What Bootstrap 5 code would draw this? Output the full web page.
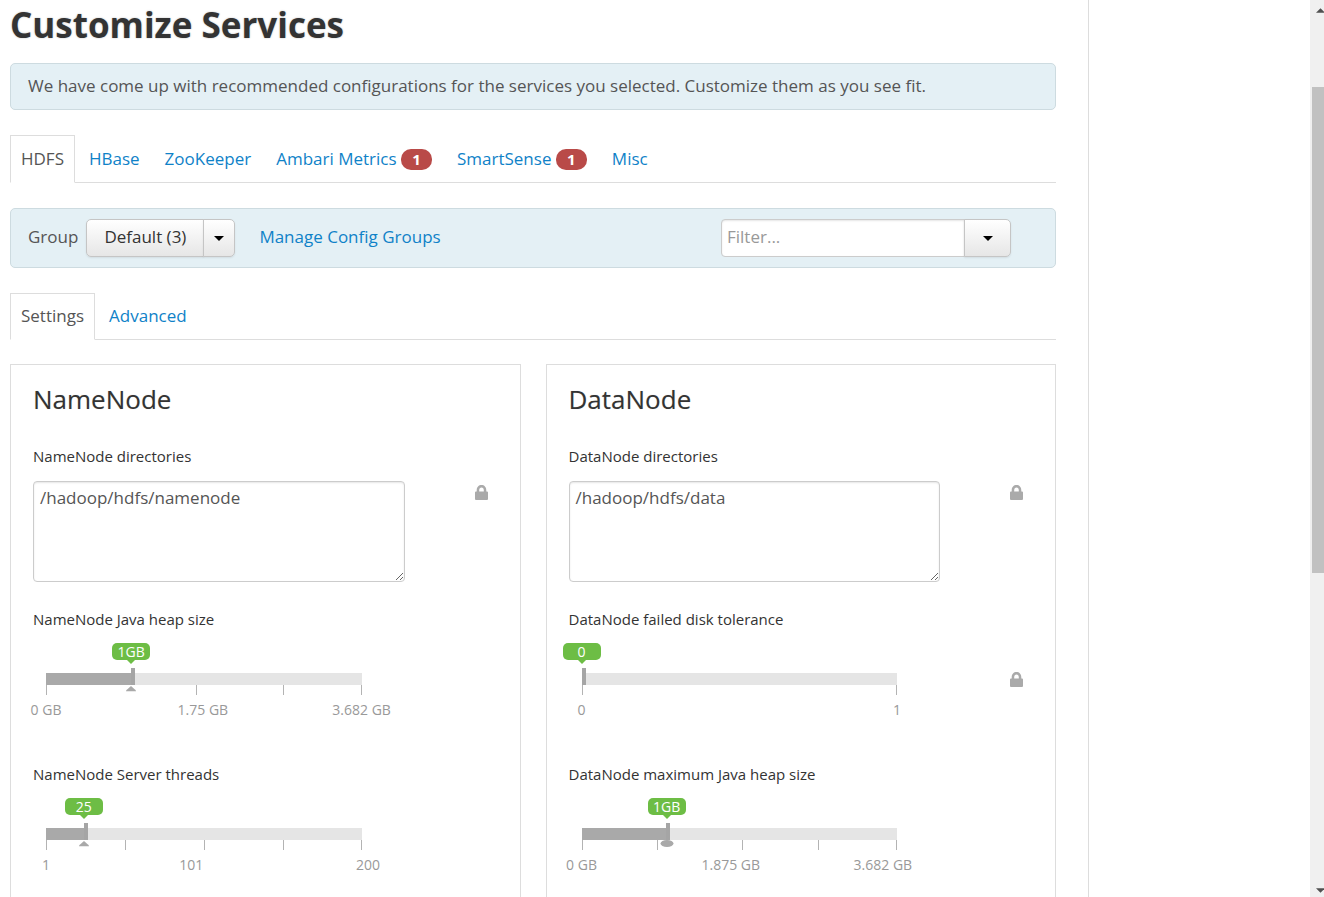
<!DOCTYPE html>
<html lang="en">
<head>
<meta charset="utf-8">
<meta name="viewport" content="width=device-width, initial-scale=1">
<title>Customize Services</title>
<link href="https://cdn.jsdelivr.net/npm/bootstrap@5.3.0/dist/css/bootstrap.min.css" rel="stylesheet">
<style>
  body { font-family: "Open Sans", "Noto Sans", sans-serif; font-size: 17px; line-height: 25px; color: #555; background: #fff; }
  a { color: #0f82c8; text-decoration: none; }
  .side-space { flex: 0 0 221px; }
  .wizard { flex: 1 1 0; border-right: 1px solid #ddd; padding: 0 32px 0 10px; }
  h1 { font-size: 35px; line-height: 50px; margin: 0 0 13px; font-weight: 700; color: #333; text-shadow: 0 0 2px #bbb; }
  .info-bar { background: #e4f0f5; border: 1px solid #cddbe0; border-radius: 5px; padding: 9px 17px 11px; margin-bottom: 25px; color: #555; }
  .group-bar { padding: 10px 44px 10px 17px; }
  .bar-text { margin-bottom: 4px; }
  .nav-tabs { --bs-nav-tabs-border-color: #ddd; margin-bottom: 25px; gap: 3px; }
  .nav-tabs .nav-link { padding: 10px; line-height: 26px; border-radius: 0; color: #0f82c8; white-space: nowrap; }
  .nav-tabs .nav-link.active { color: #555; border-color: #ddd #ddd #fff; }
  .sub-tabs { margin-bottom: 24px; }
  .sub-tabs .nav-link { padding: 9px 10px 10px; }
  .count { display: inline-block; min-width: 31px; background: #b94a48; color: #fff; font-size: 15px; font-weight: 700; line-height: 21px; border-radius: 10px; text-align: center; }
  .btn-soft { --bs-btn-padding-x: 17px; --bs-btn-font-size: 17px; --bs-btn-line-height: 26px; --bs-btn-border-radius: 5px;
    --bs-btn-color: #333; --bs-btn-border-color: #c5c5c5; --bs-btn-hover-border-color: #bbb;
    padding-top: 4px; padding-bottom: 6px;
    background-image: linear-gradient(#fff, #e6e6e6); box-shadow: 0 1px 2px rgba(0,0,0,.08); }
  .btn-soft.dropdown-toggle { padding-left: 10px; padding-right: 10px; }
  .dropdown-toggle::after { margin: 0; border-top: 5px solid #000; border-left: 5px solid transparent; border-right: 5px solid transparent; vertical-align: 2px; }
  .filter-box { width: 290px; }
  .filter-box .btn-soft { width: 47px; }
  .form-control { color: #555; border-color: #ccc; border-radius: 4px; font-size: 17px; line-height: 26px; padding: 4px 5px 6px; box-shadow: inset 0 1px 2px rgba(0,0,0,.1); }
  .form-control::placeholder { color: #999; }
  .panels { display: grid; grid-template-columns: 1fr 1fr; gap: 25px; }
  .panel { border: 1px solid #ddd; padding: 15px 22px; height: 680px; }
  h2 { font-size: 26px; line-height: 38px; margin: 0 0 26px; font-weight: 400; color: #333; text-shadow: 0 0 1px #ccc; }
  .config { margin-bottom: 25px; }
  .config label { display: block; font-size: 15px; line-height: 25px; color: #333; margin-bottom: 12px; }
  .config-cell { width: 80%; }
  textarea.form-control { height: 101px; padding: 3px 6px; }
  .lock-icon { width: 13px; height: 15px; margin-right: 10px; fill: #aaa; }
  .config-slider { margin-bottom: 38px; }
  .config-slider label { margin-bottom: 11px; }
  .slider-wrap { margin: 0 43px 0 13px; }
  .bubble-row { position: relative; height: 25px; }
  .bubble { position: absolute; transform: translateX(-50%); width: 38px; line-height: 17px; height: 17px; font-size: 14px; color: #fff; background: #6dbd45; border-radius: 5px; text-align: center; }
  .bubble::after { content: ""; position: absolute; top: 17px; left: 15px; border: 4px solid transparent; border-top-color: #6dbd45; border-bottom: 0; }
  .slider { -webkit-appearance: none; appearance: none; display: block; width: 100%; height: 17px; margin: 0; padding: 5px 0 0; background: none; }
  .slider::-webkit-slider-runnable-track { height: 12px; background: linear-gradient(to right, #a9a9a9 var(--fill), #e5e5e5 var(--fill)); }
  .slider::-webkit-slider-thumb { -webkit-appearance: none; width: 4px; height: 17px; margin-top: -5px; background: #a5a5a5; }
  .ticks { position: relative; height: 10px; }
  .ticks i { position: absolute; top: 0; width: 1px; height: 10px; background: #b3b3b3; }
  .ticks i:last-of-type { margin-left: -1px; }
  .ticks svg { position: absolute; top: 0; width: 14px; height: 7px; margin-left: -7px; fill: #a9a9a9; }
  .scale { position: relative; height: 29px; font-size: 14px; line-height: 29px; color: #999; white-space: nowrap; }
  .scale span { position: absolute; transform: translateX(-50%); }
  .scroll-rail { flex: 0 0 14px; min-width: 0; overflow: hidden; background: #f0f0f0; padding-left: 2px; }
  .scroll-rail svg { display: block; width: 9px; height: 5px; margin-left: 4px; flex-shrink: 0; fill: #505050; }
  .scroll-thumb { background: #c1c1c1; }
</style>
</head>
<body>
<svg class="d-none">
  <symbol id="lock" viewBox="0 0 13 15"><path fill-rule="evenodd" d="M1 6.500h.7V5.200C1.700 2 3.700 0 6.500 0s4.800 2 4.800 5.200v1.300h.7q1 0 1 1V14q0 1-1 1H1q-1 0-1-1V7.500q0-1 1-1zM4.200 6.500h4.600V5.200c0-1.700-.9-2.700-2.300-2.700S4.200 3.500 4.200 5.200z"/></symbol>
</svg>
<div class="d-flex vh-100 overflow-hidden">
  <main class="wizard">
    <h1>Customize Services</h1>
    <div class="info-bar">We have come up with recommended configurations for the services you selected. Customize them as you see fit.</div>
    <ul class="nav nav-tabs">
      <li class="nav-item"><a class="nav-link active" href="#">HDFS</a></li>
      <li class="nav-item"><a class="nav-link" href="#">HBase</a></li>
      <li class="nav-item"><a class="nav-link" href="#">ZooKeeper</a></li>
      <li class="nav-item"><a class="nav-link" href="#">Ambari Metrics <span class="count">1</span></a></li>
      <li class="nav-item"><a class="nav-link" href="#">SmartSense <span class="count">1</span></a></li>
      <li class="nav-item"><a class="nav-link" href="#">Misc</a></li>
    </ul>
    <div class="info-bar group-bar d-flex align-items-center">
      <span class="bar-text">Group</span>
      <div class="btn-group ms-2">
        <button type="button" class="btn btn-soft">Default (3)</button>
        <button type="button" class="btn btn-soft dropdown-toggle" aria-label="Choose group"></button>
      </div>
      <a href="#" class="bar-text ms-4">Manage Config Groups</a>
      <div class="input-group filter-box ms-auto">
        <input type="text" class="form-control" placeholder="Filter..." aria-label="Filter">
        <button type="button" class="btn btn-soft dropdown-toggle" aria-label="Filter options"></button>
      </div>
    </div>
    <ul class="nav nav-tabs sub-tabs">
      <li class="nav-item"><a class="nav-link active" href="#">Settings</a></li>
      <li class="nav-item"><a class="nav-link" href="#">Advanced</a></li>
    </ul>
    <div class="panels">
      <section class="panel">
        <h2>NameNode</h2>
        <div class="config">
          <label for="nn-dirs">NameNode directories</label>
          <div class="d-flex justify-content-between">
            <div class="config-cell"><textarea class="form-control" id="nn-dirs">/hadoop/hdfs/namenode</textarea></div>
            <svg class="lock-icon mt-1"><use href="#lock"/></svg>
          </div>
        </div>
        <div class="config config-slider">
          <label for="nn-heap">NameNode Java heap size</label>
          <div class="config-cell">
            <div class="slider-wrap">
              <div class="bubble-row"><output class="bubble" for="nn-heap" style="left:27%">1GB</output></div>
              <input type="range" class="slider" id="nn-heap" min="0" max="3.682" step="0.001" value="1" style="--fill:27%">
              <div class="ticks"><i style="left:0"></i><i style="left:47.500%"></i><i style="left:75%"></i><i style="left:100%"></i><svg viewBox="0 0 14 7" style="left:27%"><path d="M2 6.300Q2 5 3.700 4L7 1l3.300 3Q12 5 12 6.300z"/></svg></div>
              <div class="scale"><span style="left:0">0 GB</span><span style="left:49.700%">1.75 GB</span><span style="left:100%">3.682 GB</span></div>
            </div>
          </div>
        </div>
        <div class="config config-slider">
          <label for="nn-threads">NameNode Server threads</label>
          <div class="config-cell">
            <div class="slider-wrap">
              <div class="bubble-row"><output class="bubble" for="nn-threads" style="left:12%">25</output></div>
              <input type="range" class="slider" id="nn-threads" min="1" max="200" value="25" style="--fill:12%">
              <div class="ticks"><i style="left:0"></i><i style="left:25%"></i><i style="left:50%"></i><i style="left:75%"></i><i style="left:100%"></i><svg viewBox="0 0 14 7" style="left:12%"><path d="M2 6.300Q2 5 3.700 4L7 1l3.300 3Q12 5 12 6.300z"/></svg></div>
              <div class="scale"><span style="left:0">1</span><span style="left:46%">101</span><span style="left:102%">200</span></div>
            </div>
          </div>
        </div>
      </section>
      <section class="panel">
        <h2>DataNode</h2>
        <div class="config">
          <label for="dn-dirs">DataNode directories</label>
          <div class="d-flex justify-content-between">
            <div class="config-cell"><textarea class="form-control" id="dn-dirs">/hadoop/hdfs/data</textarea></div>
            <svg class="lock-icon mt-1"><use href="#lock"/></svg>
          </div>
        </div>
        <div class="config config-slider">
          <label for="dn-tolerance">DataNode failed disk tolerance</label>
          <div class="d-flex justify-content-between align-items-center">
            <div class="config-cell">
              <div class="slider-wrap">
                <div class="bubble-row"><output class="bubble" for="dn-tolerance" style="left:0">0</output></div>
                <input type="range" class="slider" id="dn-tolerance" min="0" max="1" value="0" style="--fill:0%">
                <div class="ticks"><i style="left:0"></i><i style="left:100%"></i></div>
                <div class="scale"><span style="left:0">0</span><span style="left:100%">1</span></div>
              </div>
            </div>
            <svg class="lock-icon mb-2"><use href="#lock"/></svg>
          </div>
        </div>
        <div class="config config-slider">
          <label for="dn-heap">DataNode maximum Java heap size</label>
          <div class="config-cell">
            <div class="slider-wrap">
              <div class="bubble-row"><output class="bubble" for="dn-heap" style="left:27%">1GB</output></div>
              <input type="range" class="slider" id="dn-heap" min="0" max="3.682" step="0.001" value="1" style="--fill:27%">
              <div class="ticks"><i style="left:0"></i><i style="left:24%"></i><i style="left:51%"></i><i style="left:75%"></i><i style="left:100%"></i><svg viewBox="0 0 14 7" style="left:27%"><ellipse cx="7" cy="3.500" rx="6.500" ry="3.500"/></svg></div>
              <div class="scale"><span style="left:0">0 GB</span><span style="left:47.300%">1.875 GB</span><span style="left:95.500%">3.682 GB</span></div>
            </div>
          </div>
        </div>
      </section>
    </div>
  </main>
  <div class="side-space"></div>
  <div class="scroll-rail d-flex flex-column" aria-hidden="true">
    <svg class="mt-2" viewBox="0 0 10 5"><path d="M0 5 5 0l5 5z"/></svg>
    <div class="flex-grow-1 d-flex flex-column py-2"><div style="flex:66"></div><div style="flex:487" class="scroll-thumb"></div><div style="flex:308"></div></div>
    <svg class="mb-1" viewBox="0 0 10 5"><path d="M0 0h10L5 5z"/></svg>
  </div>
</div>
<script src="https://cdn.jsdelivr.net/npm/bootstrap@5.3.0/dist/js/bootstrap.bundle.min.js"></script>
</body>
</html>
